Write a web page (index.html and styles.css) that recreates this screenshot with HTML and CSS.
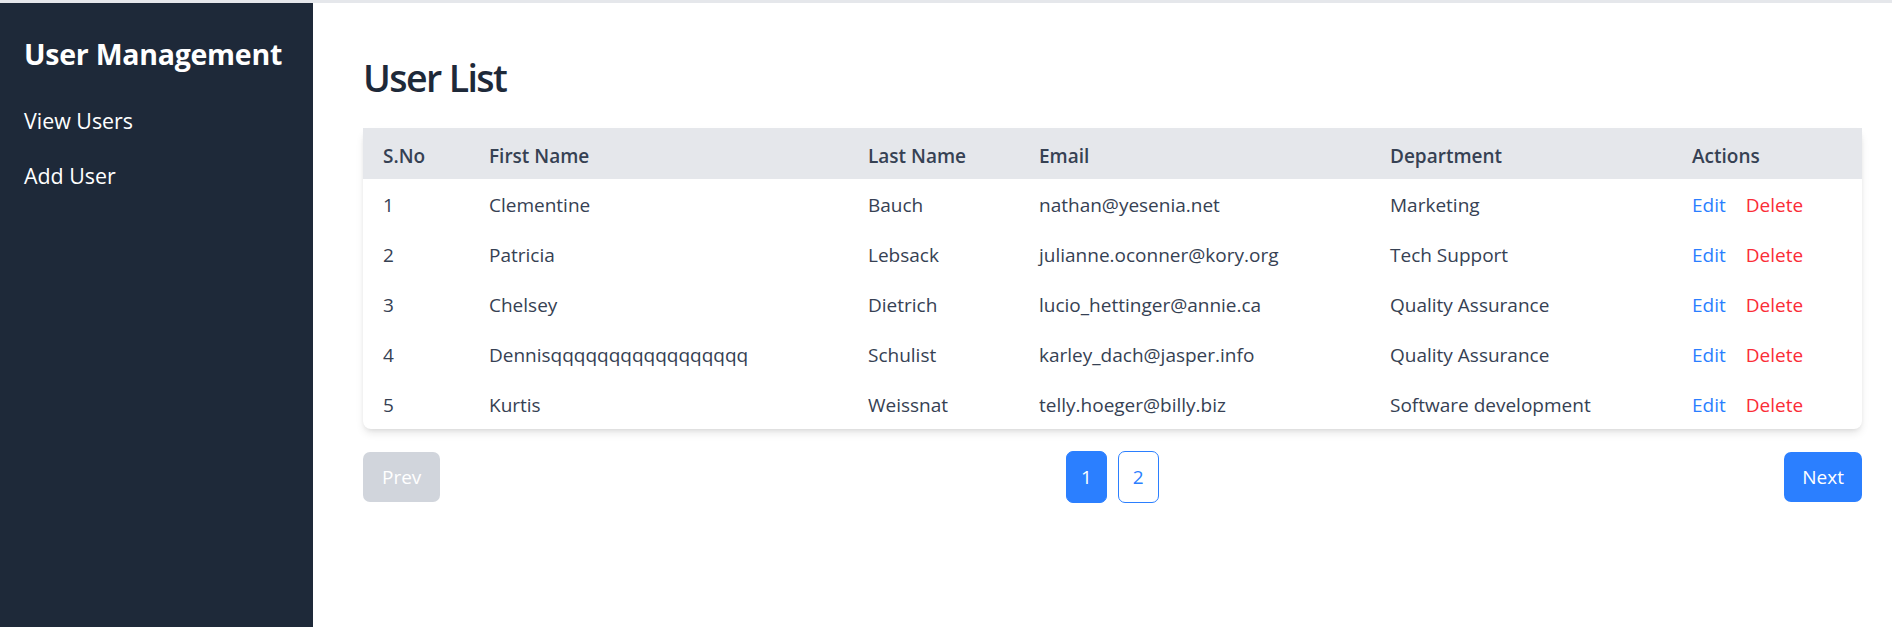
FILE: index.html
```html
<!DOCTYPE html>
<html lang="en">
<head>
<meta charset="utf-8">
<title>User Management</title>
<link rel="stylesheet" href="styles.css">
</head>
<body>
<div class="app">
  <aside class="sidebar">
    <h2 class="brand">User Management</h2>
    <nav class="nav">
      <a class="nav-link" href="#">View Users</a>
      <a class="nav-link" href="#">Add User</a>
    </nav>
  </aside>
  <main class="main">
    <h1 class="title">User List</h1>
    <div class="table-card">
      <table class="users">
        <colgroup>
          <col class="c-sno"><col class="c-first"><col class="c-last"><col class="c-email"><col class="c-dept"><col class="c-act">
        </colgroup>
        <thead>
          <tr><th>S.No</th><th>First Name</th><th>Last Name</th><th>Email</th><th>Department</th><th>Actions</th></tr>
        </thead>
        <tbody>
          <tr><td>1</td><td>Clementine</td><td>Bauch</td><td>nathan@yesenia.net</td><td>Marketing</td><td><a class="edit" href="#">Edit</a><a class="delete" href="#">Delete</a></td></tr>
          <tr><td>2</td><td>Patricia</td><td>Lebsack</td><td>julianne.oconner@kory.org</td><td>Tech Support</td><td><a class="edit" href="#">Edit</a><a class="delete" href="#">Delete</a></td></tr>
          <tr><td>3</td><td>Chelsey</td><td>Dietrich</td><td>lucio_hettinger@annie.ca</td><td>Quality Assurance</td><td><a class="edit" href="#">Edit</a><a class="delete" href="#">Delete</a></td></tr>
          <tr><td>4</td><td>Dennisqqqqqqqqqqqqqqqqq</td><td>Schulist</td><td>karley_dach@jasper.info</td><td>Quality Assurance</td><td><a class="edit" href="#">Edit</a><a class="delete" href="#">Delete</a></td></tr>
          <tr><td>5</td><td>Kurtis</td><td>Weissnat</td><td>telly.hoeger@billy.biz</td><td>Software development</td><td><a class="edit" href="#">Edit</a><a class="delete" href="#">Delete</a></td></tr>
        </tbody>
      </table>
    </div>
    <div class="pager">
      <button class="btn btn-prev" disabled>Prev</button>
      <div class="pages">
        <button class="page active">1</button>
        <button class="page">2</button>
      </div>
      <button class="btn btn-next">Next</button>
    </div>
  </main>
</div>
</body>
</html>
```
FILE: styles.css
```css
* { box-sizing: border-box; }
html, body { margin: 0; padding: 0; }
body {
  font-family: "Open Sans", "Noto Sans", sans-serif;
  font-size: 19px;
  color: #364153;
  background: #ffffff;
  border-top: 3px solid #e5e7eb;
}
.app {
  display: flex;
  min-height: 624px;
}
.sidebar {
  width: 313px;
  flex: 0 0 313px;
  background: #1e2939;
  color: #ffffff;
  padding: 32px 24px 24px 24px;
}
.brand {
  margin: 0;
  font-size: 28.5px;
  line-height: 38px;
  font-weight: 700;
  letter-spacing: -0.25px;
}
.nav {
  margin-top: 30px;
  display: flex;
  flex-direction: column;
  gap: 20px;
}
.nav-link {
  color: #ffffff;
  text-decoration: none;
  font-size: 21.4px;
  line-height: 35px;
}
.main {
  flex: 1;
  padding: 50px 30px 40px 50px;
}
.title {
  margin: 0 0 25px 0;
  font-size: 37.5px;
  line-height: 50px;
  font-weight: 600;
  letter-spacing: -1.6px;
  color: #1e2939;
}
.table-card {
  background: #ffffff;
  border-radius: 8px;
  box-shadow: 0 5px 8px -1px rgba(0,0,0,0.1), 0 2px 5px -2px rgba(0,0,0,0.1);
}
.users {
  width: 100%;
  border-collapse: collapse;
  table-layout: fixed;
}
.c-sno { width: 106px; }
.c-first { width: 379px; }
.c-last { width: 171px; }
.c-email { width: 351px; }
.c-dept { width: 302px; }
.c-act { width: 190px; }
.users thead tr { background: #e5e7eb; }
.users th {
  text-align: left;
  font-weight: 600;
  padding: 13px 20px 7.5px 20px;
  line-height: 30px;
  color: #364153;
}
.users td {
  padding: 11px 20px 9px 20px;
  line-height: 30px;
  white-space: nowrap;
}
.edit, .delete { text-decoration: none; }
.edit { color: #2b7fff; margin-right: 20px; }
.delete { color: #fb2c36; }
.pager {
  margin-top: 22px;
  display: flex;
  justify-content: space-between;
  align-items: center;
}
.btn {
  font-family: inherit;
  font-size: 19px;
  line-height: 30px;
  padding: 10px 19px;
  border: 0;
  border-radius: 7px;
  color: #ffffff;
}
.btn-prev { background: #d1d5dc; }
.btn-next { background: #2b7fff; padding: 10px 18px; }
.pages {
  display: flex;
  gap: 11px;
}
.page {
  font-family: inherit;
  font-size: 19px;
  line-height: 30px;
  padding: 10px 14px;
  border: 1px solid #2b7fff;
  border-radius: 7px;
  background: #ffffff;
  color: #2b7fff;
}
.page.active {
  background: #2b7fff;
  color: #ffffff;
}
```
